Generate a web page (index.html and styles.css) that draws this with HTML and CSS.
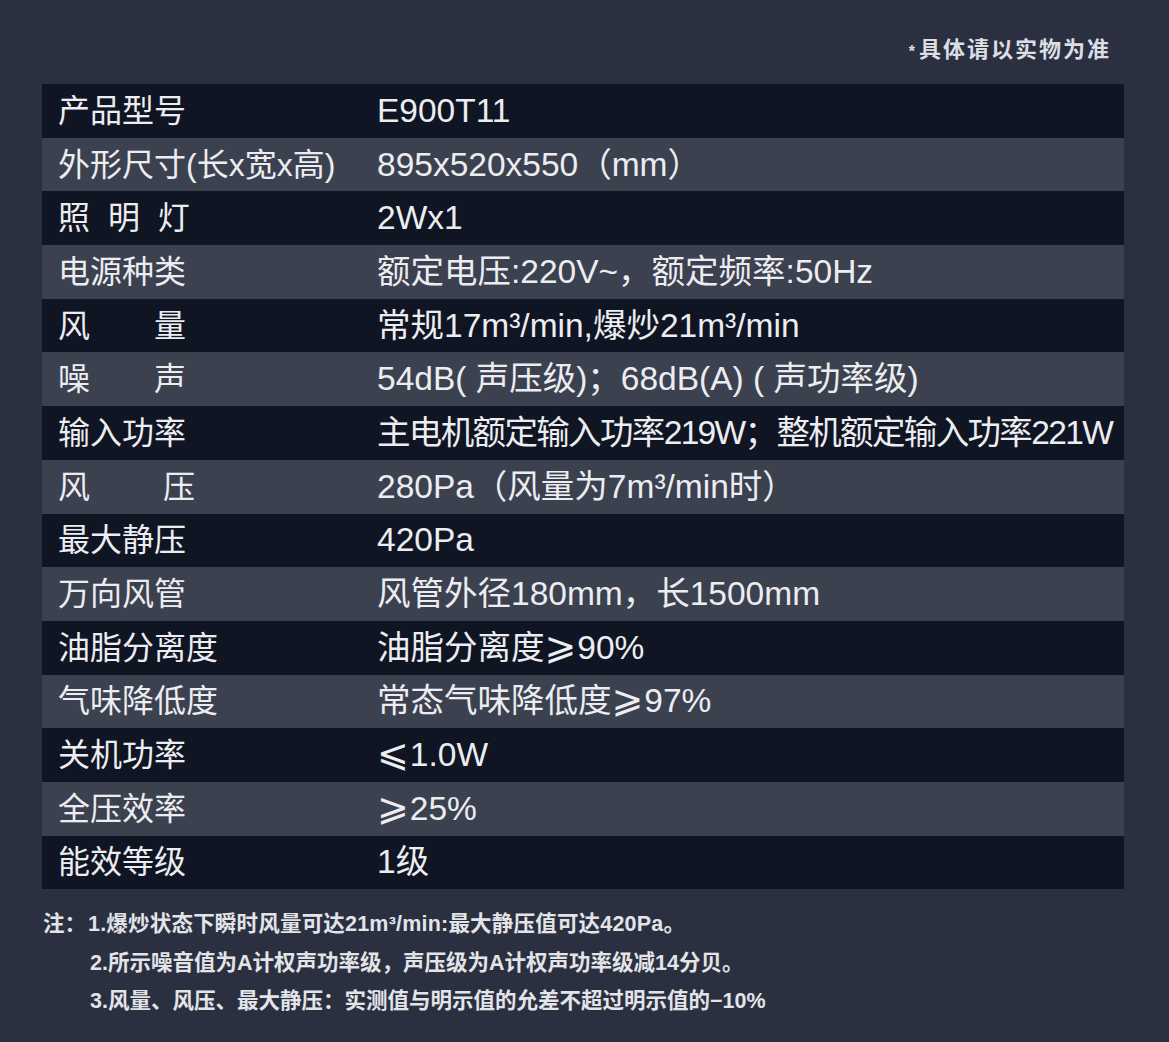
FILE: index.html
```html
<!DOCTYPE html>
<html lang="zh-CN">
<head>
<meta charset="utf-8">
<title>参数</title>
<link rel="stylesheet" href="styles.css">
</head>
<body>
<div class="page">
  <div class="note"><span class="star">*</span>具体请以实物为准</div>
  <div class="table">
    <div class="row dark"><div class="k">产品型号</div><div class="v">E900T11</div></div>
    <div class="row light"><div class="k">外形尺寸(长x宽x高)</div><div class="v">895x520x550（mm）</div></div>
    <div class="row dark"><div class="k spaced">照 明 灯</div><div class="v">2Wx1</div></div>
    <div class="row light"><div class="k">电源种类</div><div class="v">额定电压:220V~，额定频率:50Hz</div></div>
    <div class="row dark"><div class="k">风　　量</div><div class="v">常规17m³/min,爆炒21m³/min</div></div>
    <div class="row light"><div class="k">噪　　声</div><div class="v">54dB( 声压级)；68dB(A) ( 声功率级)</div></div>
    <div class="row dark"><div class="k">输入功率</div><div class="v tight">主电机额定输入功率219W；整机额定输入功率221W</div></div>
    <div class="row light"><div class="k">风　　 压</div><div class="v">280Pa（风量为7m³/min时）</div></div>
    <div class="row dark"><div class="k">最大静压</div><div class="v">420Pa</div></div>
    <div class="row light"><div class="k">万向风管</div><div class="v">风管外径180mm，长1500mm</div></div>
    <div class="row dark"><div class="k">油脂分离度</div><div class="v">油脂分离度<span class="sym">⩾</span>90%</div></div>
    <div class="row light"><div class="k">气味降低度</div><div class="v">常态气味降低度<span class="sym">⩾</span>97%</div></div>
    <div class="row dark"><div class="k">关机功率</div><div class="v"><span class="sym">⩽</span>1.0W</div></div>
    <div class="row light"><div class="k">全压效率</div><div class="v"><span class="sym">⩾</span>25%</div></div>
    <div class="row dark"><div class="k">能效等级</div><div class="v">1级</div></div>
  </div>
  <div class="foot">
    <div class="foot-label">注：</div>
    <div class="foot-lines">
      <div>1.爆炒状态下瞬时风量可达21m³/min:最大静压值可达420Pa。</div>
      <div class="indent">2.所示噪音值为A计权声功率级，声压级为A计权声功率级减14分贝。</div>
      <div class="indent">3.风量、风压、最大静压：实测值与明示值的允差不超过明示值的−10%</div>
    </div>
  </div>
</div>
</body>
</html>
```

FILE: styles.css
```css
html, body {
  margin: 0;
  padding: 0;
  background: #2b3041;
}
body {
  width: 1169px;
  height: 1042px;
  overflow: hidden;
  font-family: "Liberation Sans", "Noto Sans CJK SC", sans-serif;
  color: #ecedf0;
}
.page {
  padding: 36px 45px 0 42px;
}
.note {
  text-align: right;
  padding-right: 13px;
  font-size: 22px;
  font-weight: bold;
  letter-spacing: 2px;
  line-height: 28px;
  color: #dcdee3;
  height: 48px;
}
.note .star {
  font-size: 16px;
  margin-right: 2px;
}
.table {
  display: flex;
  flex-direction: column;
}
.row {
  display: flex;
  align-items: center;
  height: 53.7px;
  line-height: 38px;
}
.row.dark { background: #101524; }
.row.light { background: #3c4150; }
.k {
  width: 319px;
  padding-left: 16px;
  white-space: pre;
  font-size: 32px;
}
.k.spaced { word-spacing: 9px; }
.v {
  white-space: pre;
  font-size: 33.5px;
}
.v.tight {
  letter-spacing: -1.65px;
}
.sym {
  font-family: "DejaVu Sans", "Noto Sans CJK SC", sans-serif;
  font-size: 38px;
  line-height: 0;
  margin-right: 1px;
}
.foot {
  display: flex;
  padding-top: 16px;
  font-size: 21.5px;
  line-height: 38.5px;
  color: #e2e4e8;
  font-weight: bold;
}
.foot-label {
  width: 45px;
  flex: none;
  margin-left: 1px;
}
.foot-lines > div:first-child {
  letter-spacing: 0.2px;
}
.foot-lines .indent {
  padding-left: 2px;
}
```
